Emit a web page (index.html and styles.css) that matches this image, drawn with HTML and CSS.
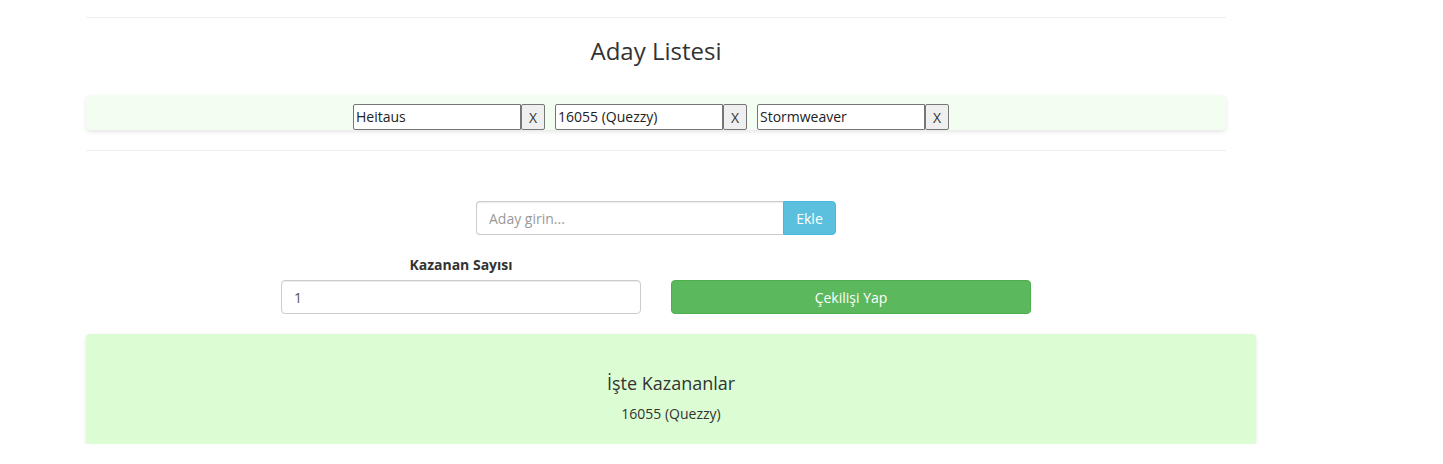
FILE: index.html
```html
<!DOCTYPE html>
<html lang="tr">
<head>
<meta charset="utf-8">
<title>Çekiliş</title>
<link rel="stylesheet" href="styles.css">
</head>
<body>
<div class="page">
  <section class="candidates">
    <hr class="rule">
    <h2 class="title">Aday Listesi</h2>
    <div class="list-box">
      <div class="entry"><input class="entry-input" type="text" value="Heitaus"><button class="entry-remove">X</button></div>
      <div class="entry"><input class="entry-input" type="text" value="16055 (Quezzy)"><button class="entry-remove">X</button></div>
      <div class="entry"><input class="entry-input" type="text" value="Stormweaver"><button class="entry-remove">X</button></div>
    </div>
    <hr class="rule rule-bottom">
  </section>

  <div class="add-row">
    <div class="input-group">
      <input class="field" type="text" placeholder="Aday girin...">
      <button class="btn btn-info">Ekle</button>
    </div>
  </div>

  <div class="draw-row">
    <div class="col">
      <label class="label">Kazanan Sayısı</label>
      <input class="field field-count" type="text" value="1">
    </div>
    <div class="col col-action">
      <button class="btn btn-success">Çekilişi Yap</button>
    </div>
  </div>

  <div class="winners">
    <h3 class="winners-title">İşte Kazananlar</h3>
    <p class="winner">16055 (Quezzy)</p>
  </div>
</div>
</body>
</html>
```

FILE: styles.css
```css
* { box-sizing: border-box; }

html, body {
  margin: 0;
  padding: 0;
  background: #fff;
  font-family: "Open Sans", "Liberation Sans", sans-serif;
  font-size: 14px;
  color: #333;
}

.page {
  margin-left: 86px;
  width: 1170px;
  padding-top: 17px;
}

.candidates {
  width: 1140px;
}

.rule {
  margin: 0;
  border: 0;
  border-top: 1px solid #eee;
  height: 0;
}

.title {
  margin: 16px 0 0;
  height: 61px;
  text-align: center;
  font-size: 24px;
  font-weight: 400;
  line-height: 34px;
  color: #333;
}

.list-box {
  display: flex;
  justify-content: center;
  align-items: flex-start;
  height: 35px;
  background: #f3fdf2;
  border-radius: 4px;
  box-shadow: 0 2px 4px rgba(0, 0, 0, 0.1);
}

.entry {
  display: flex;
  margin-right: 10px;
  padding-top: 9px;
}

.entry-input {
  width: 168px;
  height: 26px;
  margin: 0;
  padding: 0 2px 1px;
  border: 1px solid #767676;
  border-radius: 2px 0 0 2px;
  font-family: "Open Sans", sans-serif;
  font-size: 14px;
  color: #222;
  background: #fff;
}

.entry-remove {
  width: 24px;
  height: 26px;
  margin: 0;
  padding: 0;
  border: 1px solid #767676;
  border-radius: 2px;
  background: #efefef;
  font-family: "Open Sans", sans-serif;
  font-size: 14px;
  color: #333;
}

.rule-bottom {
  margin-top: 20px;
}

.add-row {
  width: 1140px;
  display: flex;
  justify-content: center;
  margin-top: 50px;
}

.input-group {
  display: flex;
  width: 360px;
}

.field {
  height: 34px;
  padding: 6px 12px;
  border: 1px solid #ccc;
  border-radius: 4px;
  font-family: "Open Sans", sans-serif;
  font-size: 14px;
  color: #555;
  background: #fff;
  box-shadow: inset 0 1px 1px rgba(0, 0, 0, 0.075);
}

.field::placeholder { color: #999; }

.input-group .field {
  flex: 1;
  border-radius: 4px 0 0 4px;
  border-right: 0;
}

.btn {
  height: 34px;
  padding: 6px 12px;
  border: 1px solid transparent;
  border-radius: 4px;
  font-family: "Open Sans", sans-serif;
  font-size: 14px;
  color: #fff;
  cursor: pointer;
}

.btn-info {
  width: 53px;
  background: #5bc0de;
  border-color: #46b8da;
  border-radius: 0 4px 4px 0;
}

.btn-success {
  width: 360px;
  background: #5cb85c;
  border-color: #4cae4c;
}

.draw-row {
  display: flex;
  width: 780px;
  margin-left: 180px;
  margin-top: 19px;
}

.col {
  width: 390px;
  padding: 0 15px;
  display: flex;
  flex-direction: column;
}

.col-action {
  justify-content: flex-end;
}

.label {
  text-align: center;
  font-weight: 700;
  font-size: 14px;
  line-height: 20px;
  margin-top: 1px;
  margin-bottom: 5px;
  color: #333;
}

.field-count {
  width: 360px;
}

.winners {
  margin-top: 20px;
  width: 1170px;
  height: 110px;
  background: #dcfdd3;
  border-radius: 4px;
  box-shadow: 0 2px 4px rgba(0, 0, 0, 0.1);
  text-align: center;
  padding-top: 37px;
}

.winners-title {
  margin: 0;
  font-size: 18px;
  font-weight: 400;
  line-height: 24px;
  color: #333;
}

.winner {
  margin: 9px 0 0;
  font-size: 14px;
  line-height: 20px;
  color: #333;
}
```
